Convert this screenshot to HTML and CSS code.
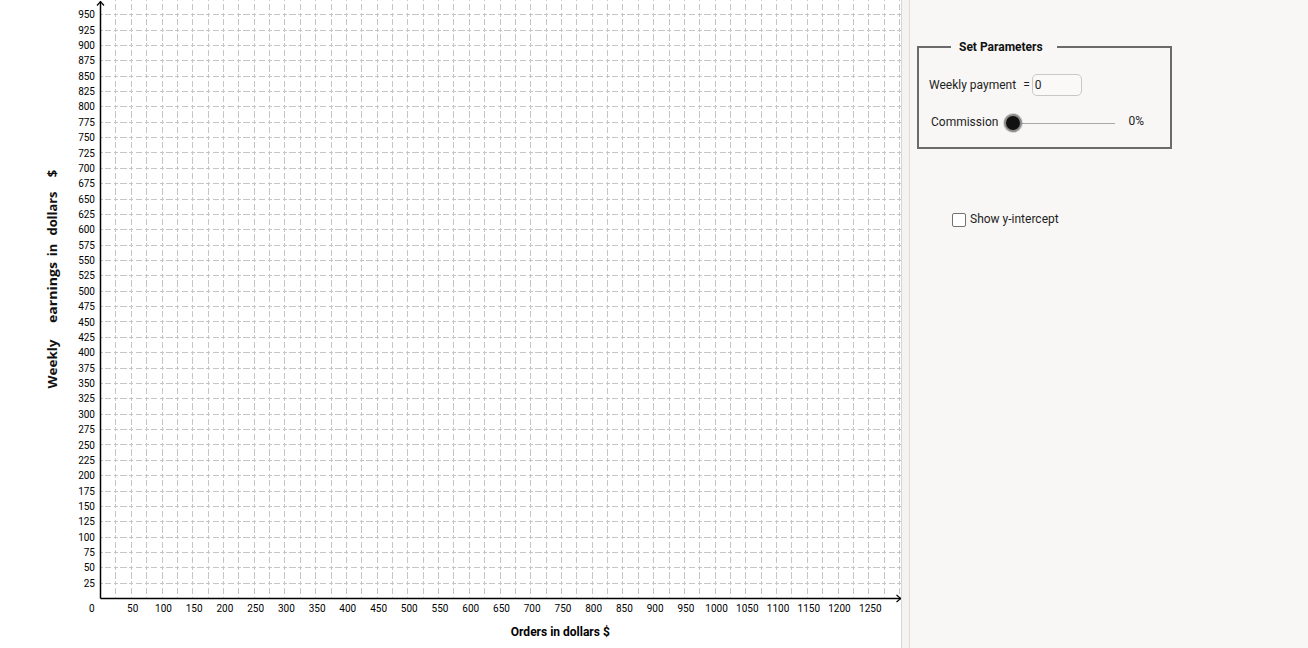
FILE: index.html
```html
<!DOCTYPE html>
<html lang="en">
<head>
<meta charset="utf-8">
<title>Weekly earnings</title>
<link rel="stylesheet" href="styles.css">
</head>
<body>
<div class="app">
  <div class="graph">
    <svg class="plot" width="901" height="648" viewBox="0 0 901 648" xmlns="http://www.w3.org/2000/svg">
      <path class="grid" d="M100.5 583.1H900.5M100.5 567.8H900.5M100.5 552.4H900.5M100.5 537H900.5M100.5 521.7H900.5M100.5 506.3H900.5M100.5 491H900.5M100.5 475.6H900.5M100.5 460.2H900.5M100.5 444.9H900.5M100.5 429.5H900.5M100.5 414.1H900.5M100.5 398.8H900.5M100.5 383.4H900.5M100.5 368H900.5M100.5 352.7H900.5M100.5 337.3H900.5M100.5 321.9H900.5M100.5 306.6H900.5M100.5 291.2H900.5M100.5 275.8H900.5M100.5 260.5H900.5M100.5 245.1H900.5M100.5 229.7H900.5M100.5 214.4H900.5M100.5 199H900.5M100.5 183.6H900.5M100.5 168.3H900.5M100.5 152.9H900.5M100.5 137.6H900.5M100.5 122.2H900.5M100.5 106.8H900.5M100.5 91.5H900.5M100.5 76.1H900.5M100.5 60.7H900.5M100.5 45.4H900.5M100.5 30H900.5M100.5 14.6H900.5"/>
      <path class="grid" d="M115.9 598.5V0M131.2 598.5V0M146.6 598.5V0M162 598.5V0M177.3 598.5V0M192.7 598.5V0M208.1 598.5V0M223.4 598.5V0M238.8 598.5V0M254.2 598.5V0M269.5 598.5V0M284.9 598.5V0M300.2 598.5V0M315.6 598.5V0M331 598.5V0M346.3 598.5V0M361.7 598.5V0M377.1 598.5V0M392.4 598.5V0M407.8 598.5V0M423.2 598.5V0M438.5 598.5V0M453.9 598.5V0M469.3 598.5V0M484.6 598.5V0M500 598.5V0M515.4 598.5V0M530.7 598.5V0M546.1 598.5V0M561.5 598.5V0M576.8 598.5V0M592.2 598.5V0M607.5 598.5V0M622.9 598.5V0M638.3 598.5V0M653.6 598.5V0M669 598.5V0M684.4 598.5V0M699.7 598.5V0M715.1 598.5V0M730.5 598.5V0M745.8 598.5V0M761.2 598.5V0M776.6 598.5V0M791.9 598.5V0M807.3 598.5V0M822.7 598.5V0M838 598.5V0M853.4 598.5V0M868.8 598.5V0M884.1 598.5V0M899.5 598.5V0"/>
      <path class="axis" d="M100.5 598.5H901M100.5 598.5V1.5"/>
      <path class="arrow" d="M896.5 595L900.8 598.5L896.5 602M97 5.5L100.5 1.6L104 5.5"/>

      <g class="ylabels">
        <text x="95" y="586.7">25</text>
        <text x="95" y="571.4">50</text>
        <text x="95" y="556">75</text>
        <text x="95" y="540.6">100</text>
        <text x="95" y="525.3">125</text>
        <text x="95" y="509.9">150</text>
        <text x="95" y="494.6">175</text>
        <text x="95" y="479.2">200</text>
        <text x="95" y="463.8">225</text>
        <text x="95" y="448.5">250</text>
        <text x="95" y="433.1">275</text>
        <text x="95" y="417.7">300</text>
        <text x="95" y="402.4">325</text>
        <text x="95" y="387">350</text>
        <text x="95" y="371.6">375</text>
        <text x="95" y="356.3">400</text>
        <text x="95" y="340.9">425</text>
        <text x="95" y="325.5">450</text>
        <text x="95" y="310.2">475</text>
        <text x="95" y="294.8">500</text>
        <text x="95" y="279.4">525</text>
        <text x="95" y="264.1">550</text>
        <text x="95" y="248.7">575</text>
        <text x="95" y="233.3">600</text>
        <text x="95" y="218">625</text>
        <text x="95" y="202.6">650</text>
        <text x="95" y="187.3">675</text>
        <text x="95" y="171.9">700</text>
        <text x="95" y="156.5">725</text>
        <text x="95" y="141.2">750</text>
        <text x="95" y="125.8">775</text>
        <text x="95" y="110.4">800</text>
        <text x="95" y="95.1">825</text>
        <text x="95" y="79.7">850</text>
        <text x="95" y="64.3">875</text>
        <text x="95" y="49">900</text>
        <text x="95" y="33.6">925</text>
        <text x="95" y="18.2">950</text>
      </g>

      <g class="xlabels">
        <text x="91.8" y="612">0</text>
        <text x="132.7" y="612">50</text>
        <text x="163.5" y="612">100</text>
        <text x="194.2" y="612">150</text>
        <text x="224.9" y="612">200</text>
        <text x="255.7" y="612">250</text>
        <text x="286.4" y="612">300</text>
        <text x="317.1" y="612">350</text>
        <text x="347.8" y="612">400</text>
        <text x="378.6" y="612">450</text>
        <text x="409.3" y="612">500</text>
        <text x="440" y="612">550</text>
        <text x="470.8" y="612">600</text>
        <text x="501.5" y="612">650</text>
        <text x="532.2" y="612">700</text>
        <text x="563" y="612">750</text>
        <text x="593.7" y="612">800</text>
        <text x="624.4" y="612">850</text>
        <text x="655.1" y="612">900</text>
        <text x="685.9" y="612">950</text>
        <text x="716.6" y="612">1000</text>
        <text x="747.3" y="612">1050</text>
        <text x="778.1" y="612">1100</text>
        <text x="808.8" y="612">1150</text>
        <text x="839.5" y="612">1200</text>
        <text x="870.3" y="612">1250</text>
      </g>

      <text class="xtitle" x="560.3" y="635.5">Orders in dollars $</text>

      <g class="ytitle">
        <text transform="translate(56.5 364) rotate(-90)" textLength="49" lengthAdjust="spacingAndGlyphs">Weekly</text>
        <text transform="translate(56.5 292.5) rotate(-90)" textLength="61" lengthAdjust="spacingAndGlyphs">earnings</text>
        <text transform="translate(56.5 250) rotate(-90)">in</text>
        <text transform="translate(56.5 213.5) rotate(-90)" textLength="44" lengthAdjust="spacingAndGlyphs">dollars</text>
        <text transform="translate(56.5 173.5) rotate(-90)">$</text>
      </g>
    </svg>
  </div>
  <div class="splitter"></div>
  <aside class="panel">
    <fieldset class="params">
      <legend class="params-title">Set Parameters</legend>
      <div class="row row-payment">
        <span class="label">Weekly payment</span>
        <span class="eq">=</span>
        <span class="field">0</span>
      </div>
      <div class="row row-commission">
        <span class="label label-commission">Commission</span>
        <div class="slider"><span class="knob"></span></div>
        <span class="pct">0%</span>
      </div>
    </fieldset>
    <div class="check">
      <span class="box"></span>
      <span class="check-label">Show y-intercept</span>
    </div>
  </aside>
</div>
</body>
</html>
```

FILE: styles.css
```css
* { box-sizing: border-box; }

html, body {
  margin: 0;
  padding: 0;
  background: #ffffff;
}

body {
  font-family: Roboto, "Liberation Sans", Arial, sans-serif;
  color: #1e1e1e;
  overflow: hidden;
}

.app {
  display: flex;
  width: 1308px;
  height: 648px;
}

.graph {
  width: 901px;
  height: 648px;
  flex: none;
  background: #ffffff;
}

.plot {
  display: block;
}

.grid {
  fill: none;
  stroke: #c6c6c6;
  stroke-width: 1;
  stroke-dasharray: 2 2.5 6.365 2.5 2 0;
  shape-rendering: crispEdges;
}

.axis {
  fill: none;
  stroke: #000000;
  stroke-width: 1.5;
}

.arrow {
  fill: none;
  stroke: #000000;
  stroke-width: 1.2;
}

.ylabels text,
.xlabels text {
  font-family: Roboto, "Liberation Sans", sans-serif;
  font-size: 10px;
  fill: #000000;
}

.ylabels text { text-anchor: end; }
.xlabels text { text-anchor: middle; }

.xtitle {
  font-family: Roboto, "Liberation Sans", sans-serif;
  font-size: 12px;
  font-weight: 700;
  text-anchor: middle;
  fill: #000000;
}

.ytitle text {
  font-family: "Open Sans", "Liberation Sans", sans-serif;
  font-size: 13px;
  font-weight: 700;
  text-anchor: middle;
  fill: #111111;
}

.splitter {
  width: 9px;
  flex: none;
  height: 648px;
  background: #f4f3f1;
  border-left: 1px solid #d6d6d6;
  border-right: 1px solid #dedddb;
}

.panel {
  flex: 1;
  height: 648px;
  background: #f8f7f5;
  padding-top: 40px;
  font-size: 12px;
}

.params {
  width: 255px;
  margin: 0 0 0 7px;
  padding: 20px 10px 15px 10px;
  border: 2px solid #6b6b6b;
  min-width: 0;
}

.params-title {
  margin-left: 22px;
  padding: 0 14px 0 8px;
  font-size: 12px;
  font-weight: 700;
  line-height: 14px;
  color: #111;
}

.row {
  display: flex;
  align-items: center;
}

.row-payment {
  height: 22px;
}

.eq {
  margin-left: 7px;
  margin-right: 2px;
}

.field {
  width: 50px;
  height: 22px;
  border: 1px solid #c8c8c8;
  border-radius: 5px;
  padding-left: 2px;
  line-height: 20px;
  background: #faf9f7;
}

.row-commission {
  height: 20px;
  margin-top: 16px;
}

.label-commission {
  margin-left: 2px;
}

.slider {
  position: relative;
  width: 111px;
  height: 20px;
  margin-left: 6px;
}

.slider::before {
  content: "";
  position: absolute;
  left: 9px;
  right: 0;
  top: 11px;
  height: 1px;
  background: #a8a8a8;
}

.knob {
  position: absolute;
  left: 0;
  top: 2px;
  width: 18px;
  height: 18px;
  border-radius: 50%;
  background: #111111;
  border: 2px solid #8a8a8a;
  box-shadow: 0 0 0 1px rgba(0, 0, 0, 0.15);
}

.pct {
  margin-left: 13px;
  margin-top: -2px;
}

.check {
  display: flex;
  align-items: center;
  margin: 63px 0 0 42px;
  height: 14px;
}

.box {
  width: 14px;
  height: 14px;
  border: 1.5px solid #737373;
  border-radius: 2px;
  background: #ffffff;
  margin-top: 2px;
}

.check-label {
  margin-left: 4px;
}
```
